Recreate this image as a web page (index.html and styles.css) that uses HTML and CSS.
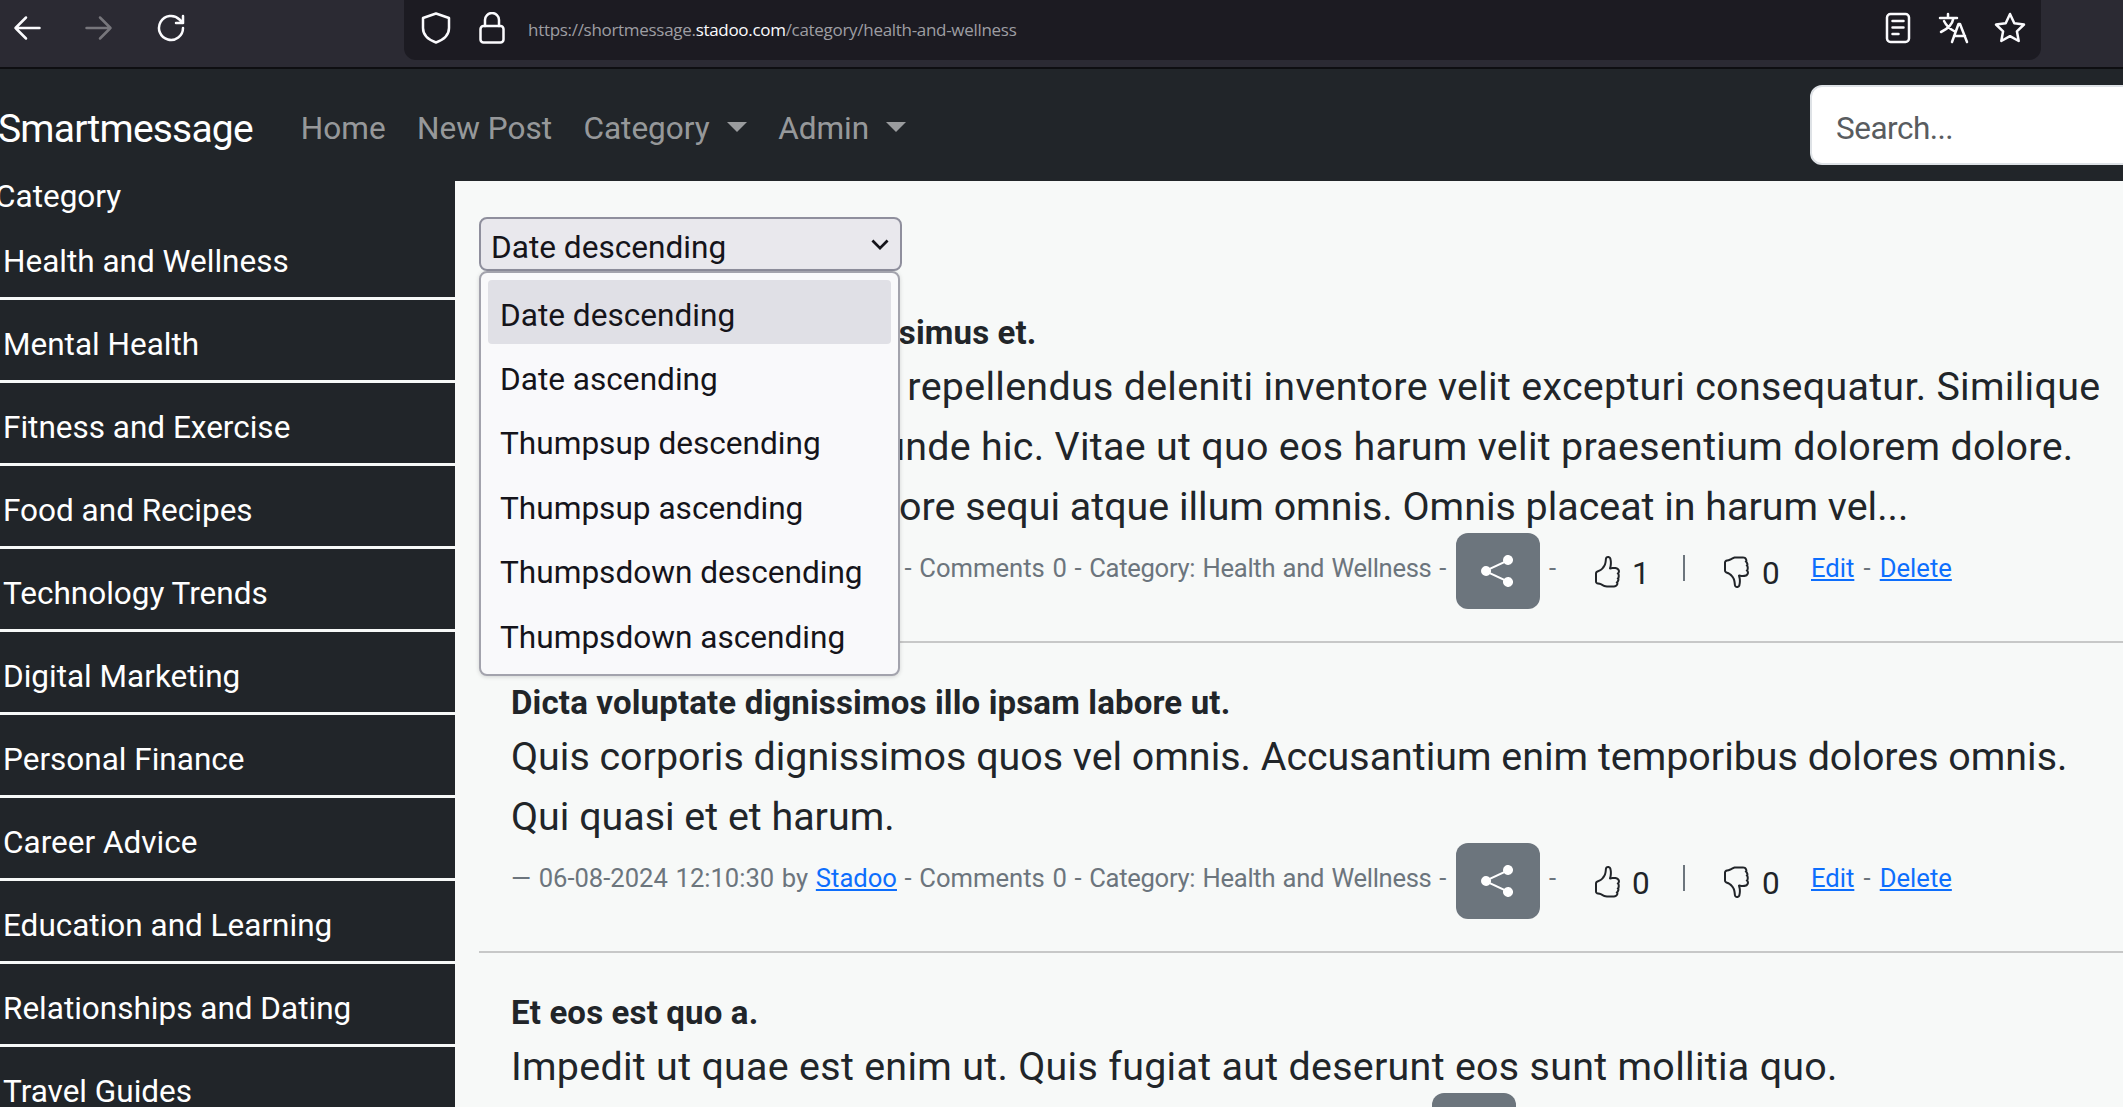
FILE: index.html
```html
<!DOCTYPE html>
<html lang="en">
<head>
<meta charset="utf-8">
<title>Smartmessage</title>
<link rel="stylesheet" href="styles.css">
</head>
<body>
<svg class="defs" width="0" height="0" aria-hidden="true">
  <defs>
    <path id="thumb" d="M8.864.046C7.908-.193 7.02.53 6.956 1.466c-.072 1.051-.23 2.016-.428 2.59-.125.36-.479 1.013-1.04 1.639-.557.623-1.282 1.178-2.131 1.41C2.685 7.288 2 7.87 2 8.72v4.001c0 .845.682 1.464 1.448 1.545 1.07.114 1.564.415 2.068.723l.048.03c.272.165.578.348.97.484.397.136.861.217 1.466.217h3.5c.937 0 1.599-.477 1.934-1.064a1.86 1.86 0 0 0 .254-.912c0-.152-.023-.312-.077-.464.201-.263.38-.578.488-.901.11-.33.172-.762.004-1.149.069-.13.12-.269.159-.403.077-.27.113-.568.113-.857 0-.288-.036-.585-.113-.856a2.144 2.144 0 0 0-.138-.362 1.9 1.9 0 0 0 .234-1.734c-.206-.592-.682-1.1-1.2-1.272-.847-.282-1.803-.276-2.516-.211a9.84 9.84 0 0 0-.443.05 9.365 9.365 0 0 0-.062-4.509A1.38 1.38 0 0 0 9.125.111L8.864.046zM11.5 14.721H8c-.51 0-.863-.069-1.14-.164-.281-.097-.506-.228-.776-.393l-.04-.024c-.555-.339-1.198-.731-2.49-.868-.333-.036-.554-.29-.554-.55V8.72c0-.254.226-.543.62-.65 1.095-.3 1.977-.996 2.614-1.708.635-.71 1.064-1.475 1.238-1.978.243-.7.407-1.768.482-2.85.025-.362.36-.594.667-.518l.262.066c.16.04.258.143.288.255a8.34 8.34 0 0 1-.145 4.725.5.5 0 0 0 .595.644l.003-.001.014-.003.058-.014a8.908 8.908 0 0 1 1.036-.157c.663-.06 1.457-.054 2.11.164.175.058.45.3.57.65.107.308.087.67-.266 1.022l-.353.353.353.354c.043.043.105.141.154.315.048.167.075.37.075.581 0 .212-.027.414-.075.582-.05.174-.111.272-.154.315l-.353.353.353.354c.047.047.109.177.005.488a2.224 2.224 0 0 1-.505.805l-.353.353.353.354c.006.005.041.05.041.17a.866.866 0 0 1-.121.416c-.165.288-.503.56-1.066.56z"/>
    <path id="share" d="M11 2.5a2.5 2.5 0 1 1 .603 1.628l-6.718 3.12a2.499 2.499 0 0 1 0 1.504l6.718 3.12a2.5 2.5 0 1 1-.488.876l-6.718-3.12a2.5 2.5 0 1 1 0-3.256l6.718-3.12A2.5 2.5 0 0 1 11 2.5z"/>
  </defs>
</svg>

<header class="chrome">
  <div class="chrome-nav">
    <svg class="ci" viewBox="0 0 28 28"><path d="M26.500 14H2.500M13 3.500 2.500 14 13 24.500"/></svg>
    <svg class="ci ci-off" viewBox="0 0 28 28"><path d="M1.500 14h24M15 3.500 25.500 14 15 24.500"/></svg>
    <svg class="ci" viewBox="0 0 28 28"><path d="M26 14a12 12 0 1 1-3.500-8.500L26 9M26 2v7h-7"/></svg>
  </div>
  <div class="urlbar">
    <svg class="ci ci-l" viewBox="0 0 32 32"><path d="M16 1.500 29 6v10c0 7-6 12-13 14.500C9 28 3 23 3 16V6z"/></svg>
    <svg class="ci ci-l" viewBox="0 0 32 32"><rect x="4.500" y="14" width="23" height="16.500" rx="3"/><path d="M9 14V8a7 7 0 0 1 14 0v6"/></svg>
    <div class="url">https://shortmessage.<b>stadoo.com</b>/category/health-and-wellness</div>
    <div class="url-tools">
      <svg class="ci ci-l" viewBox="0 0 32 32"><rect x="5" y="2" width="22" height="28" rx="3.500"/><path d="M10.500 9h11M10.500 15.500h11M10.500 22h6"/></svg>
      <svg class="ci ci-l" viewBox="0 0 32 32"><path d="M2 6h17M10 2v4M15.500 6c-1 6-6 11-12.500 14M6 9c2 4 6 8 10 10M14 30l6.500-18h1.500l7 18M16 24h11"/></svg>
      <svg class="ci ci-l" viewBox="0 0 32 32"><path d="M16 2l4.300 9.200 9.700 1.300-7.100 6.800 1.800 9.700-8.700-4.800-8.700 4.800 1.800-9.700-7.100-6.800 9.700-1.300z"/></svg>
    </div>
  </div>
</header>

<nav class="navbar">
  <a class="brand">Smartmessage</a>
  <ul class="nav-links">
    <li>Home</li>
    <li>New Post</li>
    <li class="caret">Category</li>
    <li class="caret">Admin</li>
  </ul>
  <div class="search">Search...</div>
</nav>

<div class="page">
  <aside class="sidebar">
    <div class="side-title">Category</div>
    <div class="side-item">Health and Wellness</div>
    <div class="side-item">Mental Health</div>
    <div class="side-item">Fitness and Exercise</div>
    <div class="side-item">Food and Recipes</div>
    <div class="side-item">Technology Trends</div>
    <div class="side-item">Digital Marketing</div>
    <div class="side-item">Personal Finance</div>
    <div class="side-item">Career Advice</div>
    <div class="side-item">Education and Learning</div>
    <div class="side-item">Relationships and Dating</div>
    <div class="side-item">Travel Guides</div>
  </aside>

  <main class="content">
    <div class="sort">
      <div class="select">Date descending
        <svg class="chev" viewBox="0 0 16 16"><path d="M2.500 5.500 8 11l5.500-5.500"/></svg>
      </div>
      <ul class="popup">
        <li class="active">Date descending</li>
        <li>Date ascending</li>
        <li>Thumpsup descending</li>
        <li>Thumpsup ascending</li>
        <li>Thumpsdown descending</li>
        <li>Thumpsdown ascending</li>
      </ul>
    </div>

    <article class="post">
      <h6 class="post-title">Quia voluptatis qua dignissimus et.</h6>
      <p class="lead"><span class="wide">Voluptatem quasi ulla repellendus deleniti inventore velit excepturi consequatur. Similique</span><br><span class="wide">Omnis iste ulla sit at unde hic. Vitae ut quo eos harum velit praesentium dolorem dolore.</span><br>Ipsam nulla quia tempore sequi atque illum omnis. Omnis placeat in harum vel...</p>
      <div class="meta">
        <span class="meta-text">— 06-08-2024 12:10:30 by <a class="user">Stadoo</a> - Comments 0 - <span class="cat">Category: Health and Wellness</span> -</span>
        <a class="share"><svg viewBox="0 0 16 16"><use href="#share"/></svg></a>
        <span class="dash">-</span>
        <svg class="thumb" viewBox="0 0 16 16"><use href="#thumb"/></svg><span class="count">1</span>
        <span class="sep"></span>
        <svg class="thumb down" viewBox="0 0 16 16"><use href="#thumb"/></svg><span class="count">0</span>
        <span class="links"><a>Edit</a> - <a>Delete</a></span>
      </div>
    </article>

    <article class="post">
      <h6 class="post-title">Dicta voluptate dignissimos illo ipsam labore ut.</h6>
      <p class="lead">Quis corporis dignissimos quos vel omnis. Accusantium enim temporibus dolores omnis.<br>Qui quasi et et harum.</p>
      <div class="meta">
        <span class="meta-text">— 06-08-2024 12:10:30 by <a class="user">Stadoo</a> - Comments 0 - <span class="cat">Category: Health and Wellness</span> -</span>
        <a class="share"><svg viewBox="0 0 16 16"><use href="#share"/></svg></a>
        <span class="dash">-</span>
        <svg class="thumb" viewBox="0 0 16 16"><use href="#thumb"/></svg><span class="count">0</span>
        <span class="sep"></span>
        <svg class="thumb down" viewBox="0 0 16 16"><use href="#thumb"/></svg><span class="count">0</span>
        <span class="links"><a>Edit</a> - <a>Delete</a></span>
      </div>
    </article>

    <article class="post">
      <h6 class="post-title">Et eos est quo a.</h6>
      <p class="lead"><span class="wide">Impedit ut quae est enim ut. Quis fugiat aut deserunt eos sunt mollitia quo.</span></p>
      <div class="meta meta-third">
        <a class="share"><svg viewBox="0 0 16 16"><use href="#share"/></svg></a>
      </div>
    </article>
  </main>
</div>
</body>
</html>
```
FILE: styles.css
```css
* { box-sizing: border-box; }
html, body { margin: 0; height: 100%; overflow: hidden; }
body { width: 2123px; height: 1107px; overflow: hidden; font-family: Roboto, "Liberation Sans", sans-serif; font-size: 31.5px; color: #212529; background: #f7f9f8; }
.defs { position: absolute; }
ul { list-style: none; margin: 0; padding: 0; }

/* browser chrome */
.chrome { height: 69px; background: #2b2a33; border-bottom: 2px solid #0e0e11; display: flex; }
.chrome-nav { width: 404px; display: flex; align-items: flex-start; gap: 44px; padding: 14px 0 0 13px; }
.ci { width: 28px; height: 28px; fill: none; stroke: #fbfbfe; stroke-width: 2.5; stroke-linecap: round; stroke-linejoin: round; flex: none; }
.ci-off { stroke: #77767c; }
.ci-l { width: 32px; height: 32px; }
.urlbar { width: 1637px; height: 60px; background: #1c1b22; border-radius: 0 0 12px 12px; display: flex; align-items: flex-start; gap: 24px; padding: 12px 0 0 16px; }
.url { margin-left: -4px; margin-top: 2px; font-size: 17px; line-height: 32px; letter-spacing: -0.3px; color: #9e9ea2; font-family: "Open Sans", sans-serif; }
.url b { color: #fbfbfe; font-weight: 400; }
.url-tools { margin-left: auto; display: flex; gap: 24px; padding-right: 15px; }

/* navbar */
.navbar { height: 112px; background: #212529; display: flex; align-items: center; position: relative; white-space: nowrap; padding-top: 7px; }
.brand { margin-left: -2px; font-size: 39px; letter-spacing: -0.8px; color: #fff; }
.nav-links { display: flex; margin-left: 48px; gap: 31.5px; color: rgba(255,255,255,.55); }
.caret { display: flex; align-items: center; }
.caret::after { content: ""; margin-left: 17px; border-top: 10px solid; border-left: 10px solid transparent; border-right: 10px solid transparent; margin-top: -4px; }
.search { position: absolute; left: 1810px; top: 16px; width: 400px; height: 80px; background: #fff; border: 2px solid #dee2e6; border-radius: 12px; padding: 0 24px; line-height: 84px; color: #595c5f; letter-spacing: -0.5px; }

/* layout */
.page { display: flex; height: 926px; overflow: hidden; }
.sidebar { width: 455px; flex: none; background: #212529; color: #fff; white-space: nowrap; }
.side-title { height: 36px; line-height: 32px; margin-left: -5px; }
.side-item { height: 83px; padding: 25px 0 0 3px; border-bottom: 3px solid #f7f9f8; line-height: 40px; }
.content { flex: 1; min-width: 0; padding: 36px 0 0 24px; background: #f7f9f8; }

/* sort */
.sort { position: relative; height: 54px; margin-bottom: 37px; font-size: 31.6px; }
.select { width: 423px; height: 54px; background: #e9e8ed; border: 2px solid #8f8f9d; border-radius: 8px; color: #15141a; padding: 0 10px; line-height: 58px; position: relative; }
.chev { position: absolute; right: 9px; top: 14px; width: 22px; height: 22px; fill: none; stroke: #15141a; stroke-width: 2; }
.popup { position: absolute; left: 0; top: 54px; width: 421px; height: 405px; background: #f9f9fb; border: 2px solid #a3a3ad; border-radius: 8px; padding: 7px 7px 0; color: #15141a; z-index: 2; box-shadow: 0 1px 4px rgba(0,0,0,.15); }
.popup li { height: 64.4px; line-height: 72px; padding-left: 12px; border-radius: 4px; white-space: nowrap; }
.popup .active { background: #e0e0e6; height: 64px; }

/* posts */
.post { position: relative; border-bottom: 2px solid #c7c8c8; padding: 0 0 32px 32px; margin-bottom: 35px; white-space: nowrap; }
.post-title { margin: 0; font-size: 33px; letter-spacing: 0.15px; line-height: 49px; font-weight: 700; height: 48px; }
.lead { margin: 0; padding-top: 1px; font-size: 39.4px; line-height: 60px; }
.wide { letter-spacing: 0.3px; }
.meta { margin-top: -4px; height: 76px; display: flex; align-items: center; font-size: 25.6px; word-spacing: 1.3px; color: #6c757d; }
.meta-text { margin-top: -6px; }
.cat { letter-spacing: -0.3px; }
.user { color: #0d6efd; text-decoration: underline; }
.share { position: absolute; left: 977px; width: 84px; height: 76px; border-radius: 12px; background: #6c757d; display: flex; align-items: center; justify-content: center; }
.meta-third .share { left: 953px; }
.share svg { width: 32px; height: 32px; fill: #fff; margin-left: -2px; }
.dash { position: absolute; left: 1070px; margin-top: -6px; }
.thumb { position: absolute; left: 1112px; width: 32px; height: 32px; fill: #212529; margin-top: 1px; }
.thumb.down { left: 1241px; transform: scaleY(-1); }
.count { position: absolute; left: 1153px; color: #212529; font-size: 31.5px; margin-top: 4px; }
.down + .count { left: 1283px; }
.sep { position: absolute; left: 1204px; width: 2px; height: 26px; background: #6c757d; margin-top: -6px; }
.links { position: absolute; left: 1332px; margin-top: -6px; word-spacing: 2.8px; }
.links a { color: #0d6efd; text-decoration: underline; }
```
